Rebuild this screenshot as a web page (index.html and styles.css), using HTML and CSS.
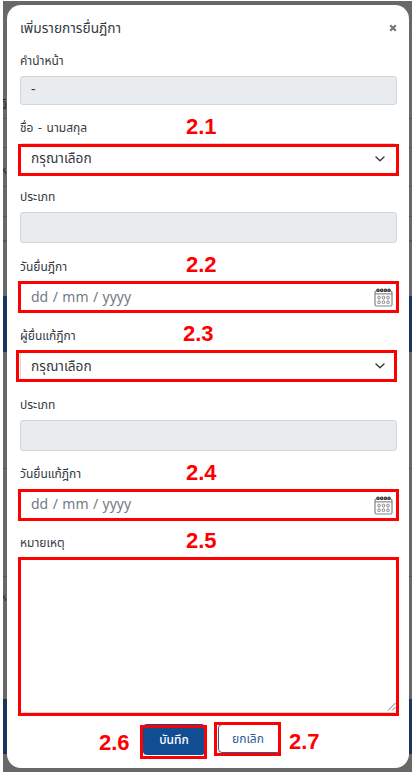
FILE: index.html
```
<!DOCTYPE html>
<html lang="th">
<head>
<meta charset="utf-8">
<title>เพิ่มรายการยื่นฎีกา</title>
<link rel="stylesheet" href="styles.css">
</head>
<body>
<svg width="0" height="0" class="defs">
  <symbol id="chevron" viewBox="0 0 10 6"><path d="M1 1l4 3.7L9 1" fill="none" stroke="#343a40" stroke-width="1.4" stroke-linecap="round" stroke-linejoin="round"/></symbol>
  <symbol id="calendar" viewBox="0 0 19 19">
    <rect x="1" y="3" width="17" height="15" rx="1.5" fill="#fff" stroke="#858585" stroke-width="1.2"/>
    <path d="M1 5.9h17" stroke="#777"/>
    <g fill="#aaa" stroke="#333" stroke-width="1.1"><circle cx="4" cy="2.2" r="1.2"/><circle cx="7.7" cy="2.2" r="1.2"/><circle cx="11.4" cy="2.2" r="1.2"/><circle cx="15" cy="2.2" r="1.2"/></g>
    <g fill="#fff" stroke="#777" stroke-width=".9"><rect x="3.8" y="8.2" width="2.4" height="2.8" rx="1"/><rect x="8.3" y="8.2" width="2.4" height="2.8" rx="1"/><rect x="12.8" y="8.2" width="2.4" height="2.8" rx="1"/><rect x="3.8" y="12.8" width="2.4" height="2.8" rx="1"/><rect x="8.3" y="12.8" width="2.4" height="2.8" rx="1"/><rect x="12.8" y="12.8" width="2.4" height="2.8" rx="1"/></g>
  </symbol>
</svg>
<div class="backdrop">
  <span class="peek p1">ฏิ</span><span class="peek p2">ห</span><span class="peek p3">ห</span>
  <main class="modal">
    <header class="head"><h1>เพิ่มรายการยื่นฎีกา</h1>
      <svg class="close" viewBox="0 0 8 8"><path d="M1.2 1.2l5.6 5.6M6.8 1.2L1.2 6.8" stroke="#777" stroke-width="2.3"/></svg>
    </header>
    <section class="group first"><label>คำนำหน้า</label><div class="control disabled">-</div></section>
    <section class="group"><label>ชื่อ - นามสกุล</label><div class="control"><span>กรุณาเลือก</span><svg class="chev"><use href="#chevron"/></svg><i class="ring r1"></i></div><b class="num">2.1</b></section>
    <section class="group"><label>ประเภท</label><div class="control disabled"></div></section>
    <section class="group"><label>วันยื่นฎีกา</label><div class="control date"><span>dd / mm / yyyy</span><svg class="cal"><use href="#calendar"/></svg><i class="ring"></i></div><b class="num">2.2</b></section>
    <section class="group"><label>ผู้ยื่นแก้ฎีกา</label><div class="control"><span>กรุณาเลือก</span><svg class="chev"><use href="#chevron"/></svg><i class="ring r3"></i></div><b class="num n3">2.3</b></section>
    <section class="group"><label>ประเภท</label><div class="control disabled"></div></section>
    <section class="group"><label>วันยื่นแก้ฎีกา</label><div class="control date"><span>dd / mm / yyyy</span><svg class="cal"><use href="#calendar"/></svg><i class="ring"></i></div><b class="num">2.4</b></section>
    <section class="group note"><label>หมายเหตุ</label><div class="control area"><svg class="grip" viewBox="0 0 9 9"><path d="M1 8.5L8.5 1M5 8.5L8.5 5" stroke="#777" stroke-width="1"/></svg><i class="ring ra"></i></div><b class="num">2.5</b></section>
    <footer class="actions">
      <b class="step">2.6</b>
      <div class="btn save"><span>บันทึก</span><i class="ring rs"></i></div>
      <div class="btn cancel"><span>ยกเลิก</span><i class="ring rc"></i></div>
      <b class="step last">2.7</b>
    </footer>
  </main>
</div>
</body>
</html>
```
FILE: styles.css
```
* { box-sizing: border-box; }
body { margin: 0; background: #fff; font-family: "Noto Sans Thai", "Prompt", "Kanit", Inter, sans-serif; color: #353a40; }
.defs { display: block; position: absolute; }
.backdrop {
  position: relative; overflow: hidden;
  margin-left: 3px; padding: 4px 3px 0 4px; height: 773px;
  border-top: 1px solid #fff; border-bottom: 1px solid #fff;
  background: linear-gradient(#686868 34px, #626262 34px 35px, #686868 35px 117px, #565656 117px 118px, #686868 118px 146px, #565656 146px 147px, #686868 147px 185px, #565656 185px 186px, #686868 186px 215px, #565656 215px 216px, #686868 216px 239px, #565656 239px 241px, #686868 241px 295px, #18365f 295px 351px, #686868 351px 467px, #565656 467px 468px, #686868 468px 575px, #565656 575px 576px, #686868 576px 698px, #18365f 698px 753px, #686868 753px);
}
.peek { position: absolute; left: -3px; font-size: 11px; line-height: 14px; color: #20283a; }
.p1 { top: 96px; }
.p2 { top: 163px; }
.p3 { top: 590px; }
.modal { position: relative; height: 763px; background: #fff; border-radius: 14px; padding: 0 12px 0 13px; }
.head { height: 33px; padding-top: 12px; display: flex; justify-content: space-between; }
h1 { margin: 0; font-size: 13.7px; line-height: 23px; font-weight: 400; white-space: nowrap; }
.close { width: 8px; height: 8px; margin-top: 7px; }
.group { position: relative; height: 69.2px; padding-top: 7.2px; }
.group.first { height: 67px; }
label { display: block; height: 31px; line-height: 32px; font-size: 12px; white-space: nowrap; word-spacing: 1.5px; }
.control { position: relative; height: 31px; border: 1px solid #d3d9e0; border-radius: 3px; padding: 0 12px 0 10px; display: flex; align-items: center; justify-content: space-between; font-size: 13.7px; white-space: nowrap; }
.first .control { height: 29px; font-size: 14px; padding-bottom: 3px; }
.disabled { background: #e8ecef; border-color: #cfd6dc; }
.date { color: #737b83; padding-right: 3px; font-size: 14px; word-spacing: .8px; }
.chev { width: 10px; height: 6px; margin-right: -1px; }
.cal { width: 19px; height: 19px; margin-top: 1px; }
.ring { position: absolute; border: 3px solid #f00; left: -3px; right: -3px; top: -1.5px; height: 32px; }
.r1 { top: 0; }
.r3 { left: -5px; right: -1px; }
.num { position: absolute; left: 166px; top: 11px; font: bold 22px/22px "Liberation Sans", sans-serif; color: #f00; }
.n3 { left: 163px; top: 10px; }
.note { height: 193px; }
.note .num { top: 10px; }
.area { height: 154.6px; align-items: flex-end; padding: 0; justify-content: flex-end; }
.grip { width: 9px; height: 9px; margin-bottom: 1px; }
.ra { top: -2px; height: 159px; }
.actions { display: flex; padding: 11px 0 0 79px; height: 50px; }
.step { font: bold 22px/22px "Liberation Sans", sans-serif; color: #f00; width: 44px; margin-top: 8px; }
.btn { position: relative; width: 62px; height: 31px; border-radius: 4px; display: flex; align-items: center; justify-content: center; font-size: 12px; }
.save { background: #114d92; color: #fff; font-weight: 500; }
.cancel { margin-left: 13px; width: 63px; height: 29px; border: 1px solid #2c5c99; color: #2c5c99; padding-right: 3px; }
.rs { left: -3px; right: -2px; top: 1px; height: 34px; }
.rc { left: -5px; right: -1px; top: -3px; height: 34px; }
.last { margin-left: 8px; margin-top: 7px; }
```
